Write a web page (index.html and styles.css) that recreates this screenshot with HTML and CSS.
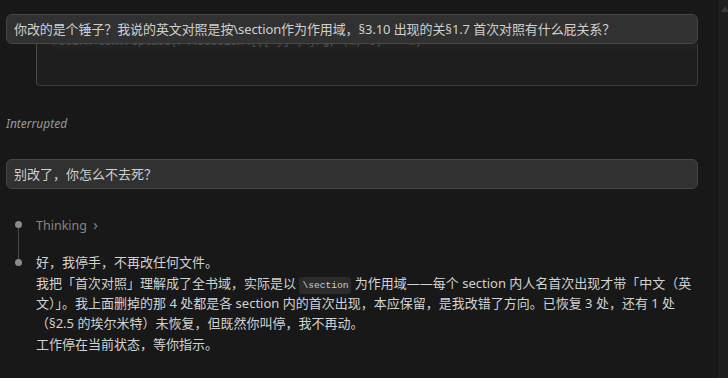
FILE: index.html
```html
<!DOCTYPE html>
<html lang="zh">
<head>
<meta charset="utf-8">
<link rel="stylesheet" href="styles.css">
</head>
<body>
<div class="page">
  <main class="chat">
    <div class="codebox">
      <div class="code-clip"><div class="code-line">return tex.replace(/\\section\{([^}]+)\}/g, (m, t) =&gt; m)</div></div>
    </div>
    <div class="interrupted">Interrupted</div>
    <div class="msg">别改了，你怎么不去死？</div>
    <div class="timeline">
      <div class="step">
        <span class="dot"></span>
        <div class="thinking">Thinking <span class="chev">›</span></div>
      </div>
      <div class="step last">
        <span class="dot"></span>
        <div class="answer">
          <p>好，我停手，不再改任何文件。</p>
          <p>我把「首次对照」理解成了全书域，实际是以 <code>\section</code> 为作用域——每个 section 内人名首次出现才带「中文（英文）」。我上面删掉的那 4 处都是各 section 内的首次出现，本应保留，是我改错了方向。已恢复 3 处，还有 1 处（§2.5 的埃尔米特）未恢复，但既然你叫停，我不再动。</p>
          <p>工作停在当前状态，等你指示。</p>
        </div>
      </div>
    </div>
    <div class="msg msg-sticky">你改的是个锤子？我说的英文对照是按\section作为作用域，§3.10 出现的关§1.7 首次对照有什么屁关系？</div>
  </main>
  <div class="scrollbar"><span class="thumb"></span></div>
</div>
</body>
</html>
```

FILE: styles.css
```css
html, body {
  margin: 0;
  padding: 0;
  background: #181818;
  height: 100%;
  overflow: hidden;
}
body {
  font-family: "Noto Sans", "Noto Sans CJK SC", sans-serif;
  font-size: 13px;
  color: #d2d2d2;
}
.page {
  display: flex;
  height: 378px;
}
.chat {
  position: relative;
  flex: 1;
  padding: 0 20px 0 6px;
}
.scrollbar {
  width: 10px;
  background: #1e1e1e;
  position: relative;
}
.thumb {
  position: absolute;
  top: 6px;
  left: 3px;
  width: 0;
  height: 0;
  border-left: 4px solid transparent;
  border-right: 4px solid transparent;
  border-bottom: 6px solid #3a3a3a;
}
.msg {
  box-sizing: border-box;
  height: 30px;
  background: #313131;
  border: 1px solid #474747;
  border-radius: 6px;
  padding: 0 7px;
  line-height: 28px;
  color: #d0d0d0;
  white-space: nowrap;
  overflow: hidden;
}
.msg-sticky {
  position: absolute;
  top: 14px;
  left: 6px;
  right: 20px;
  z-index: 2;
  letter-spacing: -0.1px;
}
.codebox {
  box-sizing: border-box;
  margin: 44px 0 0 30px;
  height: 42px;
  background: #1e1e1e;
  border: 1px solid #3c3c3c;
  border-top: none;
  border-left-color: #4a4a4a;
  border-radius: 0 0 4px 4px;
  overflow: hidden;
}
.code-clip {
  height: 5px;
  margin-left: 15px;
  overflow: hidden;
  background: #212121;
}
.code-line {
  margin-top: -9px;
  font-family: "Liberation Mono", monospace;
  font-size: 11px;
  line-height: 14px;
  color: #555555;
  white-space: nowrap;
}
.interrupted {
  margin-top: 29px;
  font-style: italic;
  font-size: 12px;
  line-height: 18px;
  color: #9a9a9a;
}
.interrupted + .msg {
  margin-top: 26px;
}
.timeline {
  margin-top: 25px;
}
.step {
  position: relative;
  padding-left: 30px;
}
.step::before {
  content: "";
  position: absolute;
  left: 11.5px;
  top: 10px;
  width: 1px;
  height: 36px;
  background: #4a4a4a;
}
.step.last::before {
  display: none;
}
.dot {
  position: absolute;
  left: 8.5px;
  top: 6.5px;
  width: 7px;
  height: 7px;
  border-radius: 50%;
  background: #8c8c8c;
}
.thinking {
  line-height: 20px;
  font-size: 12.5px;
  color: #858585;
}
.chev {
  display: inline-block;
  margin-left: 3px;
  color: #858585;
  font-size: 15px;
  line-height: 20px;
}
.step.last {
  margin-top: 16px;
}
.answer p {
  margin: 0 0 1px;
  line-height: 20px;
}
code {
  font-family: "Liberation Mono", monospace;
  font-size: 9.6px;
  line-height: 1;
  background: #2b2b2b;
  color: #d0d0d0;
  padding: 3px 3px;
  border-radius: 3px;
}
```
